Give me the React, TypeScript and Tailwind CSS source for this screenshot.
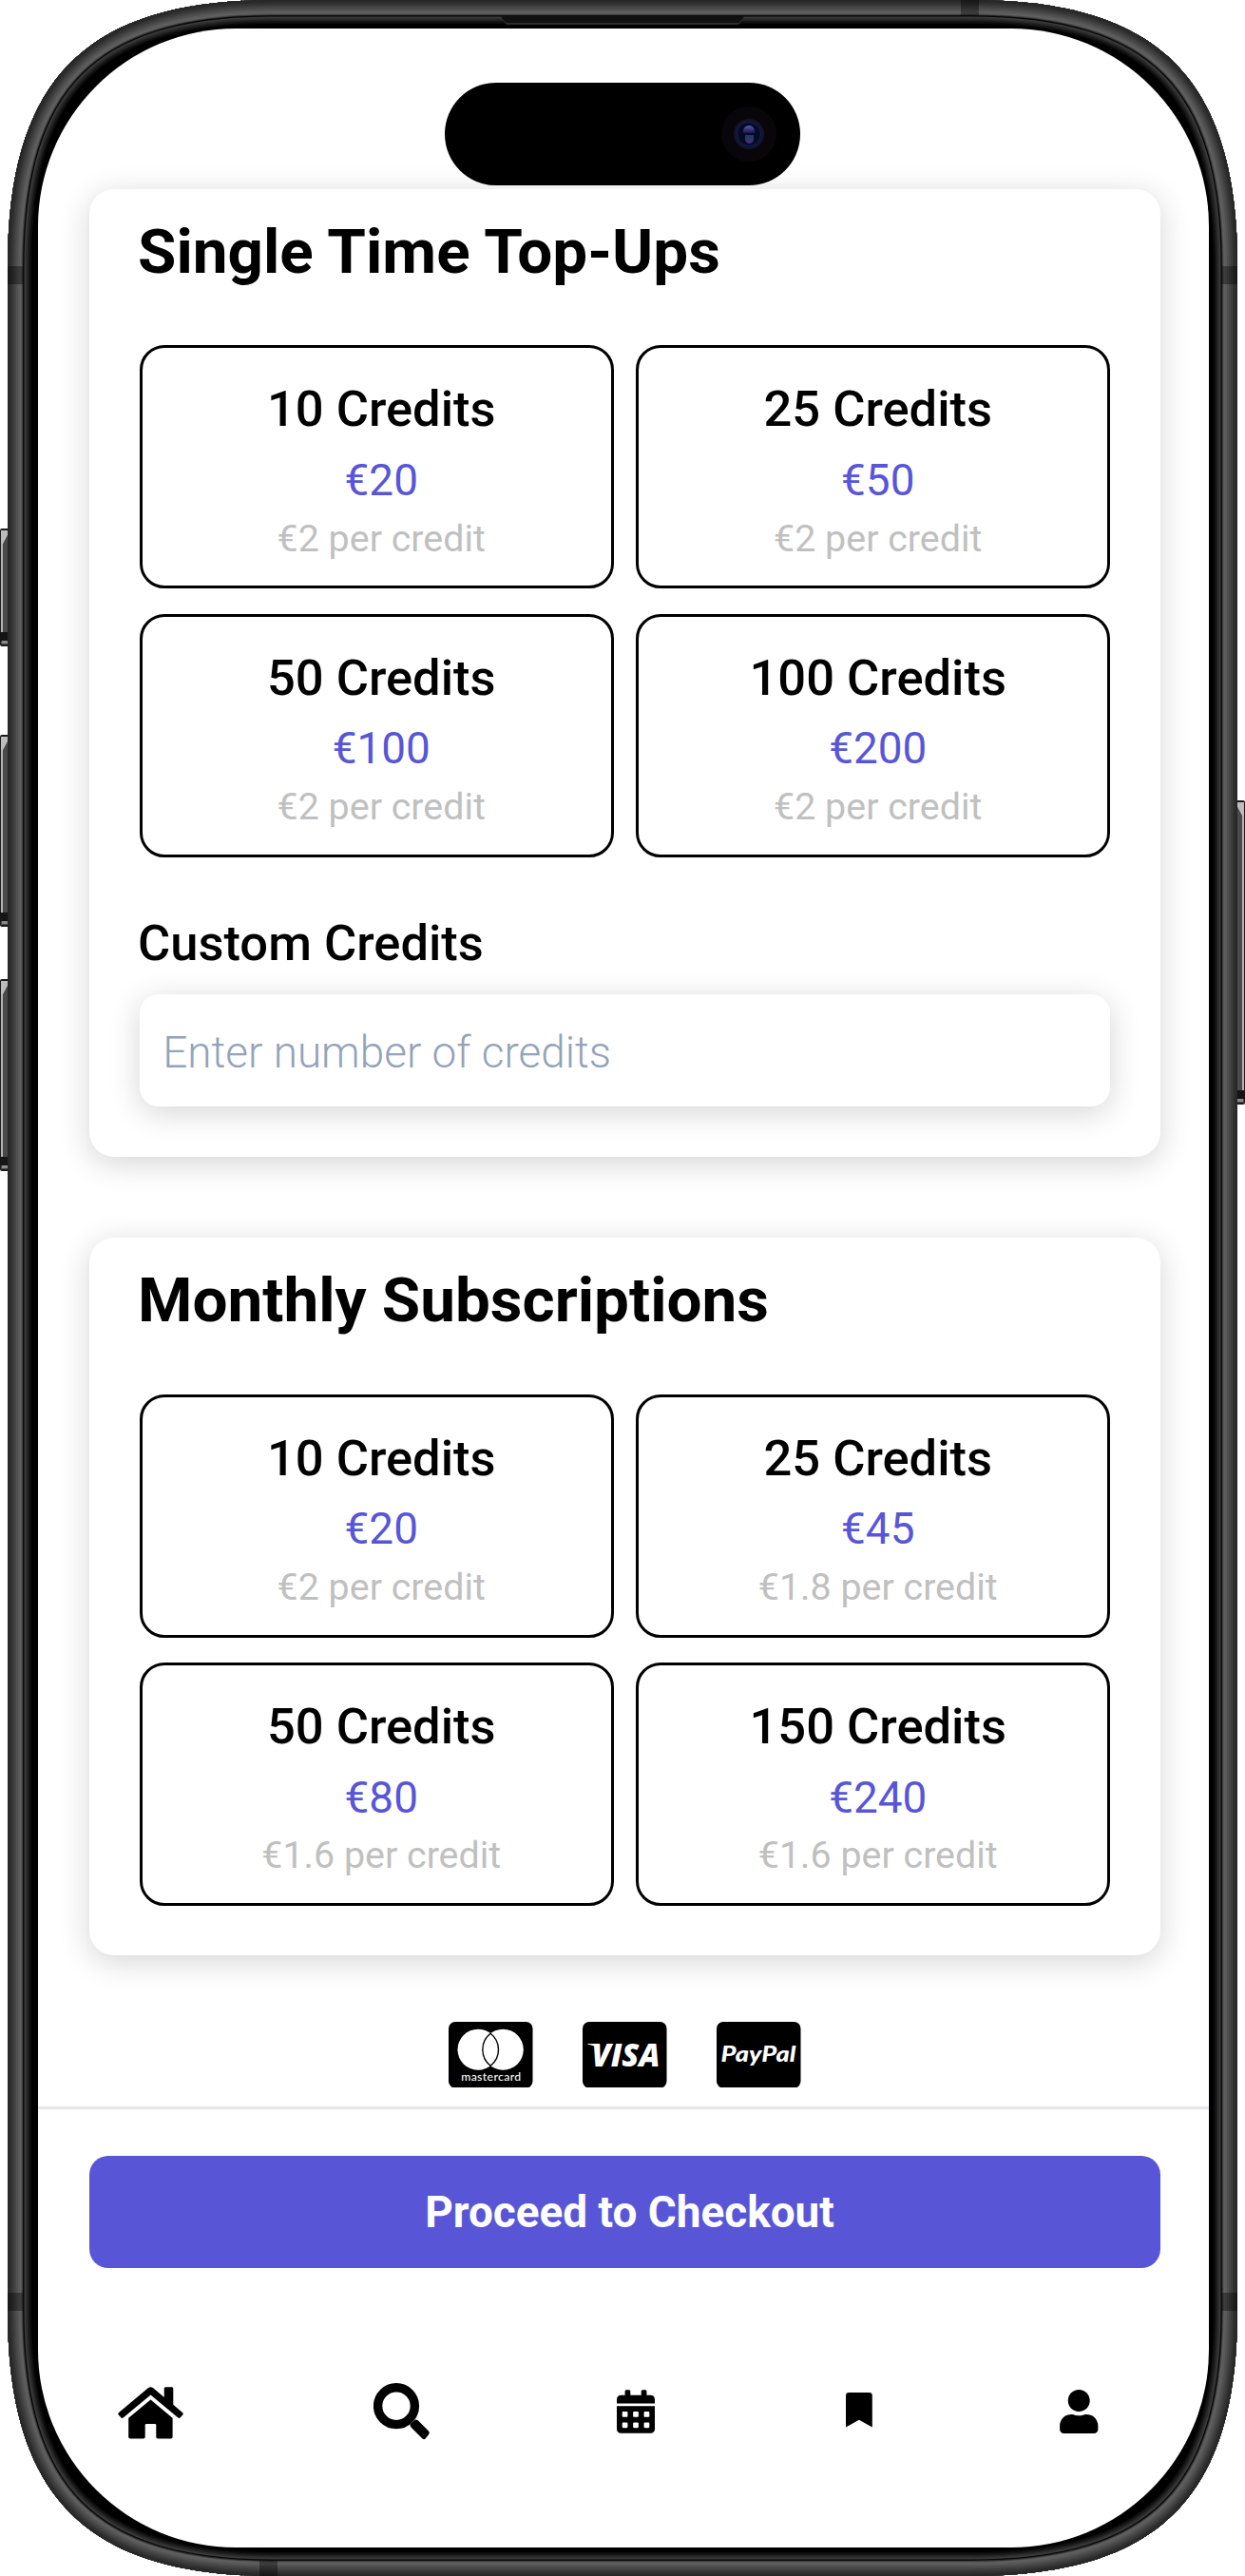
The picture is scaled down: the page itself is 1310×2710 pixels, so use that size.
import React from "react";
import { FaCalendarAlt, FaUser } from "react-icons/fa";

type Pack = { credits: string; price: string; rate: string };

const topUps: Pack[] = [
  { credits: "10 Credits", price: "€20", rate: "€2 per credit" },
  { credits: "25 Credits", price: "€50", rate: "€2 per credit" },
  { credits: "50 Credits", price: "€100", rate: "€2 per credit" },
  { credits: "100 Credits", price: "€200", rate: "€2 per credit" },
];

const subscriptions: Pack[] = [
  { credits: "10 Credits", price: "€20", rate: "€2 per credit" },
  { credits: "25 Credits", price: "€45", rate: "€1.8 per credit" },
  { credits: "50 Credits", price: "€80", rate: "€1.6 per credit" },
  { credits: "150 Credits", price: "€240", rate: "€1.6 per credit" },
];

// Distance from the outer edge of the case and the shade painted inward from there.
const bezelSteps: [number, string][] = [
  [0, "#262626"],
  [1, "#2a2a2a"],
  [3, "#323232"],
  [5, "#3c3c3c"],
  [7, "#464646"],
  [9, "#505050"],
  [11, "#5a5a5a"],
  [13, "#606060"],
  [14.5, "#4c4c4c"],
  [15.5, "#2e2e2e"],
  [16.3, "#050505"],
  [17.5, "#3a3a3a"],
  [19, "#2e2e2e"],
  [20.5, "#222222"],
  [22, "#161616"],
  [23.5, "#0b0b0b"],
  [25, "#000000"],
];

const OUTLINE =
  "M8 280C8 83 91 0 288 0H1022C1219 0 1302 83 1302 280V2430C1302 2627 1219 2710 1022 2710H288C91 2710 8 2627 8 2430Z";

function SideButton({ y, h, right }: { y: number; h: number; right?: boolean }) {
  return (
    <g transform={right ? "translate(1310 0) scale(-1 1)" : undefined}>
      <rect x={0} y={y} width={14} height={h} rx={2} fill="#1c1c1c" />
      <rect x={1} y={y + 2} width={9} height={h - 4} fill="#4a4a4a" />
      <rect x={1} y={y + 3} width={2} height={h - 18} fill="#b4b4b4" />
      <path d={`M1 ${y + 2}H9V${y + 5}L3 ${y + 16}H1Z`} fill="#bdbdbd" />
      <rect x={0} y={y + h - 15} width={9} height={9} fill="#151515" />
      <rect x={2} y={y + h - 6} width={7} height={3} fill="#8a8a8a" />
    </g>
  );
}

function Bezel() {
  return (
    <svg className="absolute inset-0" width="1310" height="2710" viewBox="0 0 1310 2710" aria-hidden="true">
      <defs>
        <clipPath id="case">
          <path d={OUTLINE} />
        </clipPath>
      </defs>
      <SideButton y={556} h={124} />
      <SideButton y={773} h={202} />
      <SideButton y={1030} h={202} />
      <SideButton y={842} h={320} right />
      <path d={OUTLINE} fill="#000" />
      <g clipPath="url(#case)" fill="none">
        {bezelSteps
          .slice(0, -1)
          .map(([, color], i) => ({ color, end: bezelSteps[i + 1][0] }))
          .reverse()
          .map(({ color, end }) => (
            <path key={end} d={OUTLINE} stroke={color} strokeWidth={end * 2} />
          ))}
      </g>
      <g fill="#000" fillOpacity="0.36">
        <rect x="8" y="280" width="16.5" height="19" />
        <rect x="1285.5" y="280" width="16.5" height="19" />
        <rect x="8" y="2412" width="16.5" height="19" />
        <rect x="1285.5" y="2412" width="16.5" height="19" />
        <rect x="1011" y="0" width="19" height="16.5" />
        <rect x="273" y="2693.5" width="19" height="16.5" />
      </g>
      <path d="M527 17.5H783L779 24Q778 26 776 26H534Q532 26 531 24Z" fill="#2c2c2c" />
      <path d="M527 17H783L779 22.5Q778 24 776 24H534Q532 24 531 22.5Z" fill="#101010" />
    </svg>
  );
}

function PackGrid({ packs }: { packs: Pack[] }) {
  return (
    <div className="mt-[52.5px] grid grid-cols-2 gap-x-[23.5px] gap-y-[26.3px]">
      {packs.map((p) => (
        <button
          key={p.credits}
          className="flex h-[256px] flex-col items-center rounded-[26px] border-[3.28px] border-black pt-[25.2px] pl-[10.5px]"
        >
          <span className="text-[52.5px] leading-[78.7px] font-medium text-black">{p.credits}</span>
          <span className="mt-[3px] text-[45.9px] leading-[65.6px] text-[#5856d6]">{p.price}</span>
          <span className="mt-[2px] text-[39.4px] leading-[52.5px] text-[#c0c0c0]">{p.rate}</span>
        </button>
      ))}
    </div>
  );
}

function Card({ title, className, children }: { title: string; className: string; children: React.ReactNode }) {
  return (
    <section
      className={
        "mr-[51px] ml-[54px] rounded-[26px] bg-white px-[52.5px] pt-[20px] pb-[52.5px] shadow-[0_6.5px_32px_rgba(0,0,0,0.17)] " +
        className
      }
    >
      <h2 className="-ml-[1.5px] text-[65.6px] leading-[91.8px] font-bold text-black">{title}</h2>
      {children}
    </section>
  );
}

function PaymentBadges() {
  return (
    <div className="mt-[69.5px] ml-[432px] flex gap-[52.5px]">
      <svg width="88.5" height="69.5" viewBox="0 0 88.5 69.5" role="img">
        <rect width="88.5" height="69.5" rx="7" />
        <circle cx="31" cy="29.2" r="21.5" fill="#fff" />
        <circle cx="57.3" cy="29.2" r="21.5" fill="#fff" />
        <path
          d="M44.15 12.2A21.5 21.5 0 0 1 44.15 46.2A21.5 21.5 0 0 1 44.15 12.2Z"
          fill="#fff"
          stroke="#000"
          strokeWidth="1.4"
        />
        <text x="44.7" y="61.6" textAnchor="middle" textLength="63" fontSize="12.2" fontFamily="Lato" fontWeight="500" fill="#fff">
          mastercard
        </text>
      </svg>
      <svg width="88.5" height="69.5" viewBox="0 0 88.5 69.5" role="img">
        <rect width="88.5" height="69.5" rx="7" />
        <text x="9.5" y="46.6" textLength="72" lengthAdjust="spacingAndGlyphs" fontSize="33" fontFamily="Open Sans" fontStyle="italic" fontWeight="800" fill="#fff">
          VISA
        </text>
        <path d="M5.5 23H14L18.5 29Q13 24.5 5.5 23.7Z" fill="#fff" />
      </svg>
      <svg width="88.5" height="69.5" viewBox="0 0 88.5 69.5" role="img">
        <rect width="88.5" height="69.5" rx="7" />
        <text x="4.5" y="41.5" textLength="79" lengthAdjust="spacingAndGlyphs" fontSize="23.5" fontFamily="Lato" fontStyle="italic" fontWeight="900" fill="#fff">
          PayPal
        </text>
      </svg>
    </div>
  );
}

function HomeIcon() {
  return (
    <svg width="69" height="55" viewBox="0 0 69 55">
      <path d="M31.8 1.2Q34.5-.8 37.2 1.2L48.7 10.9V1.8Q48.7.3 50.2.3H56.8Q58.3.3 58.3 1.8V18.8L68.2 27.2Q69.2 28.2 68.3 29.4L65.5 32.6Q64.5 33.4 63.4 32.5L34.5 8.4L5.6 32.5Q4.5 33.4 3.5 32.6L.7 29.4Q-.2 28.2.8 27.2Z" />
      <path d="M34.5 13.6L57.6 32.8V52.8Q57.6 54.5 55.9 54.5H42Q40.3 54.5 40.3 52.8V40.2Q40.3 39 39.1 39H29.9Q28.7 39 28.7 40.2V52.8Q28.7 54.5 27 54.5H12.9Q11.2 54.5 11.2 52.8V32.8Z" />
    </svg>
  );
}

function SearchIcon() {
  return (
    <svg width="60" height="60" viewBox="0 0 60 60">
      <circle cx="24" cy="24.2" r="19.4" fill="none" stroke="#000" strokeWidth="9.4" />
      <path d="M38.5 43.5L43.5 38.7Q45.3 38 47 39.5L58 50.4Q59.6 52.3 58.2 54L54.6 58.5Q53.2 60 51.5 58.6L39.7 46.8Q38 45 38.5 43.5Z" />
    </svg>
  );
}

function BookmarkIcon() {
  return (
    <svg width="28" height="37" viewBox="0 0 28 37">
      <path d="M0 36.5V3.2Q0 0 3.2 0H24.6Q27.8 0 27.8 3.2V36.5L13.9 28.8Z" />
    </svg>
  );
}

export default function App() {
  return (
    <div className="relative h-[2710px] w-[1310px] overflow-hidden bg-white font-['Roboto',sans-serif]">
      <Bezel />
      <div className="relative flex h-full px-[40px] py-[30px]">
        <main className="flex h-[2650px] w-[1231.5px] shrink-0 flex-col overflow-hidden rounded-[208px] bg-white">
          <Card title="Single Time Top-Ups" className="mt-[169px]">
            <PackGrid packs={topUps} />
            <label className="mt-[51.5px] -ml-[1.5px] block text-[52.5px] leading-[78.7px] font-medium text-black">
              Custom Credits
            </label>
            <input
              placeholder="Enter number of credits"
              className="mt-[14px] block h-[118.5px] w-full rounded-[20px] bg-white px-[24.7px] pt-[3px] text-[45.9px] font-light shadow-[0_6.5px_32px_rgba(0,0,0,0.17)] placeholder:text-[#94a3b8]"
            />
          </Card>
          <Card title="Monthly Subscriptions" className="mt-[85.5px]">
            <PackGrid packs={subscriptions} />
          </Card>
          <PaymentBadges />
          <footer className="mt-[19.5px] border-t-[3.5px] border-[#e5e5ea] pt-[49px]">
            <button className="mr-[51px] ml-[54px] block h-[118.5px] w-[1126.5px] rounded-[20px] bg-[#5856d6] pt-[1px] pl-[10.5px] text-[45.9px] font-bold text-white">
              Proceed to Checkout
            </button>
            <nav className="mt-[120.5px] ml-[84px] flex items-start text-black">
              <span className="mt-[4px]">
                <HomeIcon />
              </span>
              <span className="ml-[200px]">
                <SearchIcon />
              </span>
              <FaCalendarAlt className="mt-[7px] ml-[196px] h-[46px] w-[40px]" />
              <span className="mt-[10.5px] ml-[201px]">
                <BookmarkIcon />
              </span>
              <FaUser className="mt-[7px] ml-[197px] h-[46px] w-[40.5px]" />
            </nav>
          </footer>
        </main>
      </div>
      {/* Dynamic island */}
      <div className="absolute top-[87px] left-[468px] h-[108px] w-[374px] rounded-full bg-black">
        <div className="absolute top-[25px] left-[291px] flex size-[58px] items-center justify-center rounded-full bg-[#08060a]">
          <div className="flex size-[32px] items-center justify-center rounded-full bg-[#14142a]">
            <div className="flex size-[26px] flex-col items-center justify-center gap-[2px] rounded-full border border-[#122260] bg-[#060a24]">
              <span className="h-[8px] w-[12px] rounded-t-full bg-linear-to-b from-[#5c5cae] to-[#1a1650]" />
              <span className="h-[9px] w-[9px] rounded-b-full bg-linear-to-b from-[#0e3f58] to-[#47257c]" />
            </div>
          </div>
        </div>
      </div>
    </div>
  );
}
